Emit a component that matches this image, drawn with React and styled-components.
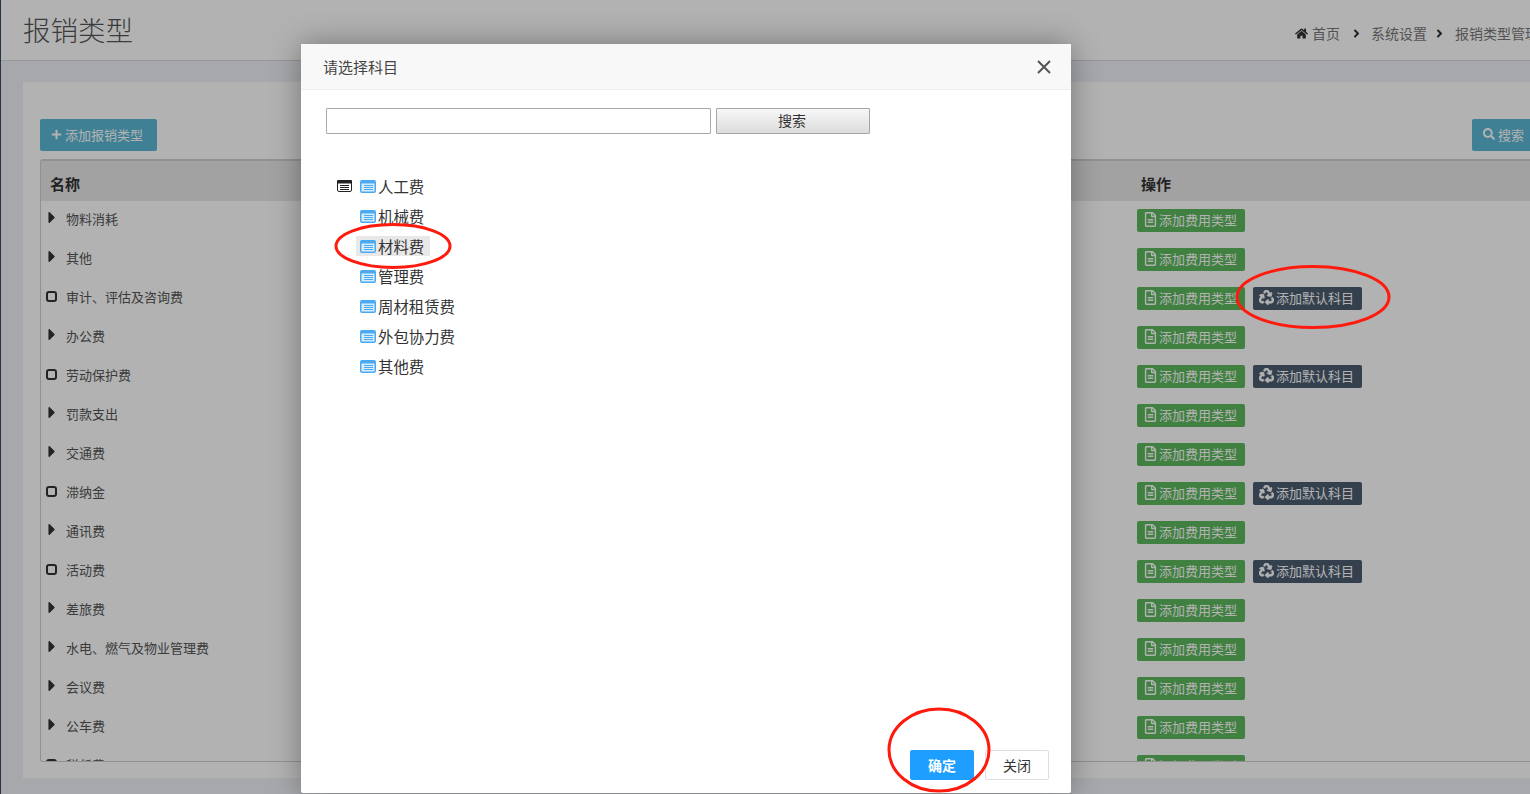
import React from "react";
import styled, { createGlobalStyle } from "styled-components";
import {
  FaHome,
  FaPlus,
  FaSearch,
  FaRegFileAlt,
  FaRecycle,
  FaCaretRight,
  FaAngleRight,
} from "react-icons/fa";

const FONT = `"Liberation Sans", "Noto Sans CJK SC", sans-serif`;

const GlobalStyle = createGlobalStyle`
  html, body {
    margin: 0;
    padding: 0;
    height: 100%;
    overflow: hidden;
    background: #eff1f6;
    font-family: ${FONT};
  }
  * { box-sizing: border-box; }
`;

const Page = styled.div`
  width: 1530px;
  height: 794px;
  overflow: hidden;
  display: flex;
  position: relative;
`;

const SideEdge = styled.div`
  flex: 0 0 1px;
  background: #3a4a63;
`;

const Main = styled.div`
  flex: 0 0 1560px;
  height: 794px;
  display: flex;
  flex-direction: column;
`;

const Header = styled.header`
  flex: 0 0 61px;
  background: #fff;
  border-bottom: 1px solid #d8d8d8;
  display: flex;
  align-items: center;
  justify-content: space-between;
  padding: 0 0 0 22px;
`;

const Title = styled.h1`
  margin: 3px 0 0;
  font-size: 27.5px;
  font-weight: 300;
  color: #555;
  line-height: 1;
`;

const Crumbs = styled.div`
  display: flex;
  align-items: center;
  font-size: 14px;
  color: #777;
  flex: 0 0 266px;
  white-space: nowrap;
  margin-top: 6px;
  svg { color: #333; }
`;

const CrumbSep = styled.span`
  display: inline-flex;
  color: #444;
  margin: ${(p) => p.$margin};
`;

const Content = styled.div`
  flex: 1;
  min-height: 0;
  padding: 21px 0 16px 22px;
`;

const Panel = styled.section`
  height: 100%;
  background: #fff;
  padding: 37px 22px 16px 17px;
  display: flex;
  flex-direction: column;
`;

const Toolbar = styled.div`
  display: flex;
  flex: none;
  justify-content: space-between;
  margin-bottom: 8px;
`;

const InfoButton = styled.button`
  height: 32px;
  width: ${(p) => p.$width}px;
  border: none;
  border-radius: 2px;
  background: #5bb8d5;
  color: #fff;
  font: 13px ${FONT};
  display: flex;
  align-items: center;
  gap: 3px;
  padding: 0 0 2px 11px;
`;

const Table = styled.div`
  flex: 1;
  min-height: 0;
  overflow: hidden;
  border: 1px solid #d0d0d0;
  border-top-width: 2px;
  border-radius: 3px;
`;

const HeadRow = styled.div`
  height: 40px;
  background: #e8e8e8;
  display: grid;
  grid-template-columns: 1091px 1fr;
  align-items: center;
  font-size: 15px;
  font-weight: 700;
  color: #333;
  padding: 4px 0 0 9px;
`;

const Row = styled.div`
  height: 39px;
  display: grid;
  grid-template-columns: 1096px 1fr;
`;

const NameCell = styled.div`
  display: flex;
  align-items: center;
  height: 34px;
  padding-left: 6px;
  font-size: 13px;
  color: #555;
`;

const Caret = styled(FaCaretRight)`
  width: 10px;
  height: 19px;
  color: #333;
  margin: -2px 9px 0 0;
  flex: none;
`;

const LeafBox = styled.span`
  width: 11px;
  height: 11px;
  border: 2px solid #333;
  border-radius: 3px;
  margin: 0 8px 0 0;
  flex: none;
  position: relative;
  left: -1px;
`;

const ActionCell = styled.div`
  display: flex;
  gap: 8px;
  padding-top: 8px;
`;

const SmallButton = styled.span`
  height: 23px;
  width: ${(p) => p.$width}px;
  border-radius: 2px;
  background: ${(p) => p.$bg};
  color: #fff;
  font-size: 13px;
  display: flex;
  align-items: center;
  gap: ${(p) => p.$gap}px;
  padding: 0 0 2px 6px;
  white-space: nowrap;
  svg { flex: none; }
`;

const Recycle = styled(FaRecycle)`
  width: 15px;
  height: 15px;
  stroke: currentColor;
  stroke-width: 24;
`;

const Backdrop = styled.div`
  position: absolute;
  inset: 0;
  background: rgba(0, 0, 0, 0.3);
`;

const Modal = styled.div`
  position: absolute;
  left: 301px;
  top: 44px;
  width: 770px;
  height: 749px;
  background: #fff;
  border-radius: 2px;
  box-shadow: 0 0 30px rgba(0, 0, 0, 0.35);
  display: flex;
  flex-direction: column;
`;

const ModalHead = styled.div`
  height: 46px;
  background: #f8f8f8;
  border-bottom: 1px solid #eee;
  display: flex;
  align-items: center;
  justify-content: space-between;
  padding: 0 20px 0 22px;
  font-size: 15px;
  color: #444;
`;

const CloseIcon = styled.svg`
  width: 14px;
  height: 14px;
  stroke: #555;
  stroke-width: 2;
`;

const ModalBody = styled.div`
  flex: 1;
  padding: 18px 25px 0;
`;

const SearchRow = styled.div`
  display: flex;
  gap: 5px;
`;

const SearchInput = styled.input`
  width: 385px;
  height: 26px;
  border: 1px solid #a9a9a9;
  border-radius: 1px;
  outline: none;
  background: #fff;
`;

const SearchButton = styled.button`
  width: 154px;
  height: 26px;
  border: 1px solid #a5a5a5;
  border-radius: 1px;
  background: linear-gradient(#f8f8f8, #dcdcdc);
  color: #333;
  font: 14px ${FONT};
  padding: 0 2px 2px 0;
`;

const Tree = styled.ul`
  list-style: none;
  margin: 37px 0 0;
  padding: 0;
`;

const TreeRow = styled.li`
  height: 30px;
  display: flex;
  align-items: center;
  padding-left: 11px;
`;

const TreeSwitch = styled.span`
  width: 23px;
  flex: none;
  display: flex;
`;

const TreeNode = styled.span`
  display: flex;
  align-items: center;
  height: 20px;
  gap: 2px;
  margin-left: -4px;
  padding: 0 6px 0 4px;
  font-size: 15.4px;
  color: #333;
  background: ${(p) => (p.$selected ? "#e8e8e8" : "transparent")};
`;

const ModalFoot = styled.div`
  display: flex;
  justify-content: flex-end;
  gap: 11px;
  padding: 0 22px 13px;
`;

const FootButton = styled.button`
  width: 64px;
  height: 30px;
  border-radius: 2px;
  border: 1px solid ${(p) => (p.$primary ? "#1e9fff" : "#dedede")};
  background: ${(p) => (p.$primary ? "#1e9fff" : "#fff")};
  color: ${(p) => (p.$primary ? "#fff" : "#333")};
  font: ${(p) => (p.$primary ? 700 : 400)} 14px ${FONT};
  padding: 0;
`;

// red marks somebody drew on top of the screenshot
const Marks = styled.svg`
  position: absolute;
  inset: 0;
  width: 1530px;
  height: 794px;
  pointer-events: none;
  fill: none;
  stroke: #ff1a0e;
  stroke-width: 3;
`;

const RootIcon = () => (
  <svg width="15" height="12" viewBox="0 0 15 12">
    <rect x="0.5" y="0.5" width="14" height="11" rx="1.5" fill="#fff" stroke="#222" />
    <rect x="0" y="0" width="15" height="3.5" rx="1" fill="#222" />
    <path d="M3 5.5h9M3 7.5h9M3 9.5h9" stroke="#222" />
  </svg>
);

const NodeIcon = () => (
  <svg width="16" height="13" viewBox="0 0 16 13">
    <rect x="0" y="0" width="16" height="13" rx="2" fill="#4aa9f2" />
    <rect x="1.5" y="3.5" width="13" height="8" fill="#d8edfc" />
    <path d="M4 5.5h9M4 7.5h9M4 9.5h9" stroke="#4aa9f2" />
  </svg>
);

const rows = [
  { name: "物料消耗" },
  { name: "其他" },
  { name: "审计、评估及咨询费", leaf: true },
  { name: "办公费" },
  { name: "劳动保护费", leaf: true },
  { name: "罚款支出" },
  { name: "交通费" },
  { name: "滞纳金", leaf: true },
  { name: "通讯费" },
  { name: "活动费", leaf: true },
  { name: "差旅费" },
  { name: "水电、燃气及物业管理费" },
  { name: "会议费" },
  { name: "公车费" },
  { name: "税任费", leaf: true },
];

const treeItems = ["人工费", "机械费", "材料费", "管理费", "周材租赁费", "外包协力费", "其他费"];

export default function App() {
  return (
    <Page>
      <GlobalStyle />
      <SideEdge />
      <Main>
        <Header>
          <Title>报销类型</Title>
          <Crumbs>
            <FaHome size={13} style={{ marginRight: 4 }} />
            首页
            <CrumbSep $margin="0 8px 0 10px"><FaAngleRight size={13} /></CrumbSep>
            系统设置
            <CrumbSep $margin="0 9px 0 6px"><FaAngleRight size={13} /></CrumbSep>
            报销类型管理
          </Crumbs>
        </Header>
        <Content>
          <Panel>
            <Toolbar>
              <InfoButton $width={117}><FaPlus size={11} />添加报销类型</InfoButton>
              <InfoButton $width={67}><FaSearch size={12} />搜索</InfoButton>
            </Toolbar>
            <Table>
              <HeadRow>
                <span>名称</span>
                <span>操作</span>
              </HeadRow>
              {rows.map((row) => (
                <Row key={row.name}>
                  <NameCell>
                    {row.leaf ? <LeafBox /> : <Caret />}
                    {row.name}
                  </NameCell>
                  <ActionCell>
                    <SmallButton $bg="#5cb85c" $width={108} $gap={1}>
                      <FaRegFileAlt size={15} />添加费用类型
                    </SmallButton>
                    {row.leaf && row.name !== "税任费" && (
                      <SmallButton $bg="#4b5c6f" $width={109} $gap={2}>
                        <Recycle />添加默认科目
                      </SmallButton>
                    )}
                  </ActionCell>
                </Row>
              ))}
            </Table>
          </Panel>
        </Content>
      </Main>
      <Backdrop />
      <Modal>
        <ModalHead>
          请选择科目
          <CloseIcon viewBox="0 0 14 14">
            <path d="M1 1l12 12M13 1L1 13" />
          </CloseIcon>
        </ModalHead>
        <ModalBody>
          <SearchRow>
            <SearchInput />
            <SearchButton>搜索</SearchButton>
          </SearchRow>
          <Tree>
            {treeItems.map((item, i) => (
              <TreeRow key={item}>
                <TreeSwitch>{i === 0 && <RootIcon />}</TreeSwitch>
                <TreeNode $selected={item === "材料费"}>
                  <NodeIcon />
                  {item}
                </TreeNode>
              </TreeRow>
            ))}
          </Tree>
        </ModalBody>
        <ModalFoot>
          <FootButton $primary>确定</FootButton>
          <FootButton>关闭</FootButton>
        </ModalFoot>
      </Modal>
      <Marks viewBox="0 0 1530 794">
        <ellipse cx="393" cy="246" rx="57" ry="21.5" />
        <ellipse cx="1313" cy="297" rx="76" ry="30.5" />
        <ellipse cx="939" cy="750" rx="50" ry="41" />
      </Marks>
    </Page>
  );
}
